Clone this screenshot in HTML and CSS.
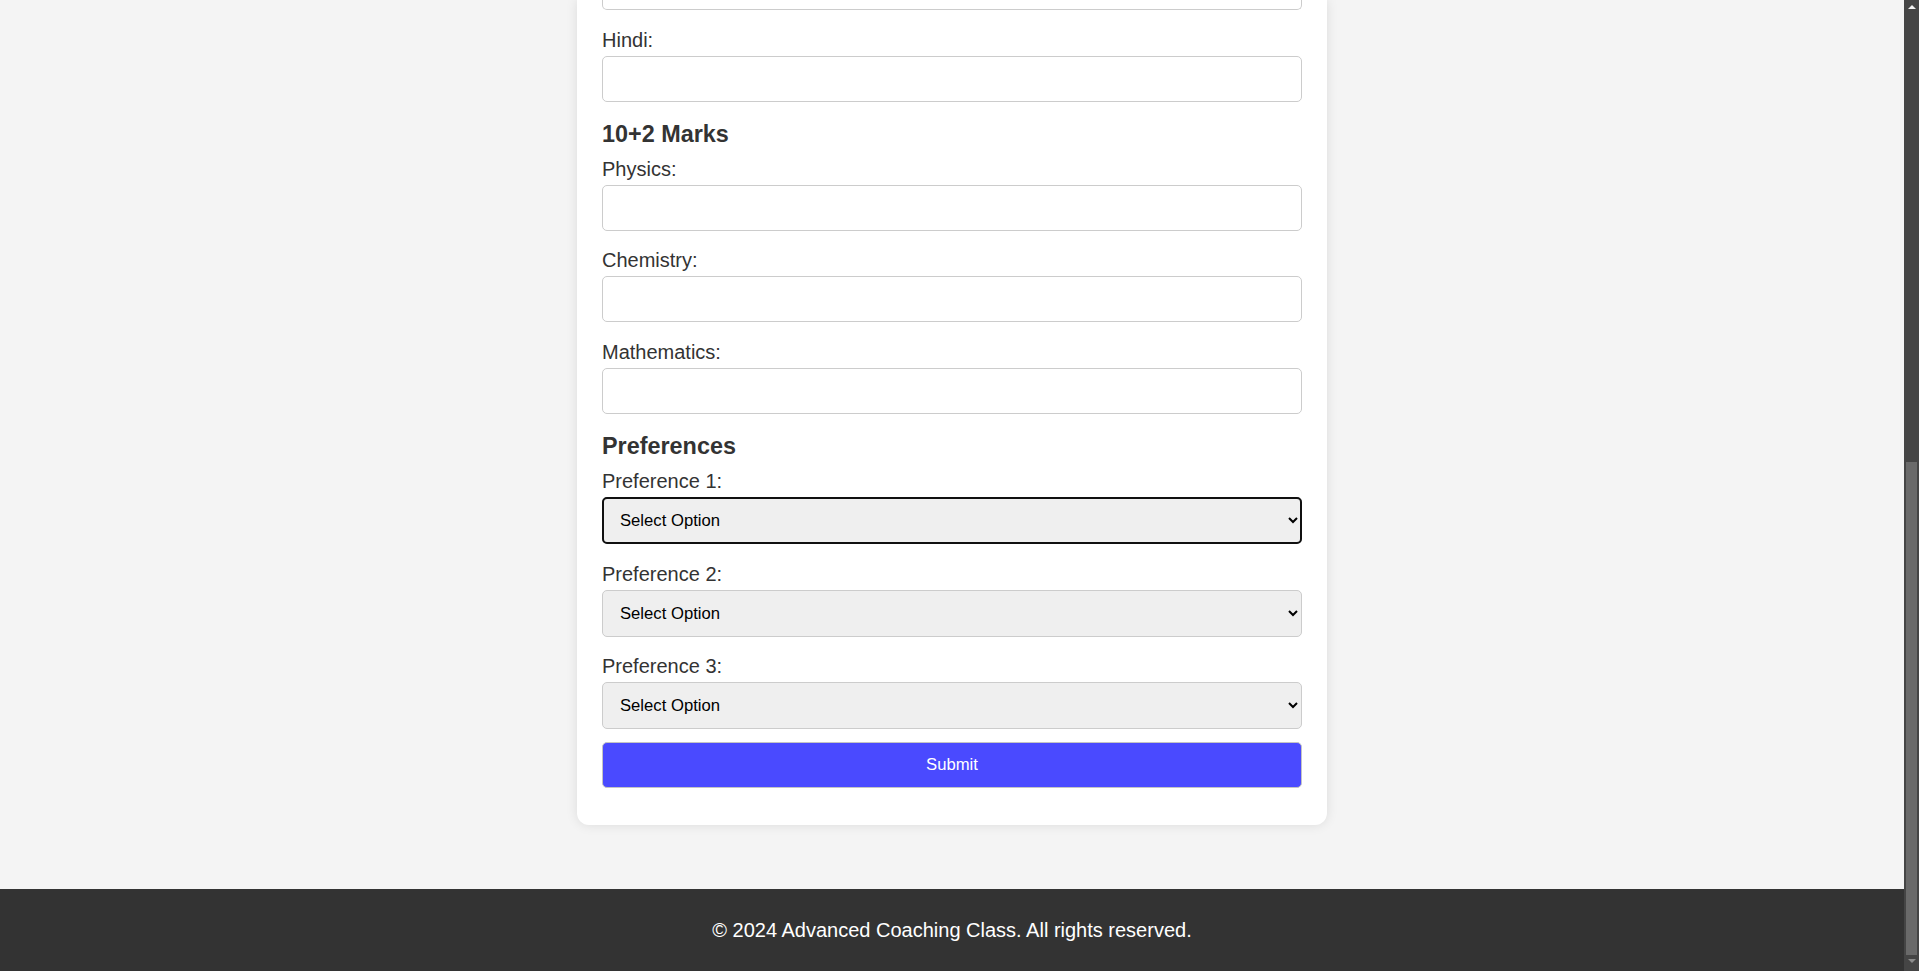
FILE: index.html
```html
<!DOCTYPE html>
<html lang="en">
<head>
<meta charset="utf-8">
<title>Advanced Coaching Class - Registration</title>
<link rel="stylesheet" href="styles.css">
</head>
<body>
<div class="window">
  <div class="page">
    <main class="page-main">
      <form class="card">
        <div class="field-tail" aria-hidden="true"></div>
        <div class="field"><label class="field-label" for="h10">Hindi:</label><input class="field-input" id="h10" type="number"></div>

        <h3 class="section-title">10+2 Marks</h3>
        <div class="field"><label class="field-label" for="p12">Physics:</label><input class="field-input" id="p12" type="number"></div>
        <div class="field"><label class="field-label" for="c12">Chemistry:</label><input class="field-input" id="c12" type="number"></div>
        <div class="field"><label class="field-label" for="m12">Mathematics:</label><input class="field-input" id="m12" type="number"></div>

        <h3 class="section-title">Preferences</h3>
        <div class="field"><label class="field-label" for="pref1">Preference 1:</label>
          <select class="field-select is-focused" id="pref1"><option>Select Option</option><option>JEE Main</option><option>JEE Advanced</option><option>NEET</option></select></div>
        <div class="field"><label class="field-label" for="pref2">Preference 2:</label>
          <select class="field-select" id="pref2"><option>Select Option</option><option>JEE Main</option><option>JEE Advanced</option><option>NEET</option></select></div>
        <div class="field field-last"><label class="field-label" for="pref3">Preference 3:</label>
          <select class="field-select" id="pref3"><option>Select Option</option><option>JEE Main</option><option>JEE Advanced</option><option>NEET</option></select></div>

        <button class="submit-btn" type="button">Submit</button>
      </form>
    </main>
    <footer class="site-footer">
      <p class="footer-text">© 2024 Advanced Coaching Class. All rights reserved.</p>
    </footer>
  </div>
  <div class="scrollbar" aria-hidden="true">
    <div class="scroll-btn scroll-btn-up"><span class="arrow-up"></span></div>
    <div class="scroll-track"><div class="scroll-thumb"></div></div>
    <div class="scroll-btn scroll-btn-down"><span class="arrow-down"></span></div>
  </div>
</div>
</body>
</html>
```

FILE: styles.css
```css
* { box-sizing: border-box; }

html, body {
  margin: 0;
  padding: 0;
  height: 100%;
  overflow: hidden;
}

body {
  background: #f4f4f4;
  font-family: "Liberation Sans", Arial, sans-serif;
  color: #333;
}

.window {
  display: flex;
  height: 100vh;
}

.page {
  flex: 1;
  display: flex;
  flex-direction: column;
  min-width: 0;
}

.page-main {
  flex: 1;
}

/* scrollbar column */
.scrollbar {
  width: 15px;
  flex: none;
  display: flex;
  flex-direction: column;
  background: #454545;
}
.scroll-btn {
  display: flex;
  justify-content: center;
  flex: none;
}
.scroll-btn-up {
  height: 17px;
  padding-top: 5px;
}
.scroll-btn-down {
  height: 16px;
  padding-top: 4px;
}
.arrow-up {
  width: 0;
  height: 0;
  border-left: 4px solid transparent;
  border-right: 4px solid transparent;
  border-bottom: 4px solid #f0f0f0;
}
.arrow-down {
  width: 0;
  height: 0;
  border-left: 4px solid transparent;
  border-right: 4px solid transparent;
  border-top: 4px solid #8c8c8c;
}
.scroll-track {
  flex: 1;
  display: flex;
  flex-direction: column;
  justify-content: flex-end;
  padding: 0 2px;
}
.scroll-thumb {
  height: 493px;
  background: #6a6a6a;
}

/* card */
.card {
  width: 750px;
  margin: 0 auto;
  background: #fff;
  border-radius: 0 0 12px 12px;
  padding: 0 25px 37px;
  box-shadow: 0 0 12px rgba(0, 0, 0, 0.1);
}

.field-tail {
  height: 10px;
  border: 1px solid #ccc;
  border-top: none;
  border-radius: 0 0 5px 5px;
  margin-bottom: 18.75px;
}

.section-title {
  margin: 0 0 10px;
  font-size: 23.4px;
  line-height: 27px;
  font-weight: bold;
  color: #333;
}

.field {
  margin-bottom: 18.75px;
}
.field-last {
  margin-bottom: 13px;
}

.field-label {
  display: block;
  font-size: 20px;
  line-height: 23px;
  margin-bottom: 4px;
  color: #333;
}

.field-input,
.field-select {
  display: block;
  width: 100%;
  border: 1px solid #ccc;
  border-radius: 5px;
  font-family: "Liberation Sans", Arial, sans-serif;
}

.field-input {
  height: 46px;
  padding: 10px;
  font-size: 20px;
  background: #fff;
}

.field-select {
  height: 47px;
  padding: 0 10px 0 13px;
  font-size: 16.67px;
  color: #000;
  background-color: #efefef;
}

.is-focused {
  outline: 2px solid #101010;
  outline-offset: -2px;
}

.submit-btn {
  display: block;
  width: 100%;
  height: 46px;
  background: #4a4aff;
  color: #fff;
  border: 1px solid #c4c4c4;
  border-radius: 5px;
  font-family: "Liberation Sans", Arial, sans-serif;
  font-size: 16.67px;
  cursor: pointer;
}

.site-footer {
  flex: none;
  background: #333;
  color: #fff;
  text-align: center;
  padding: 30px 0 29px;
}
.footer-text {
  margin: 0;
  font-size: 20px;
  line-height: 23px;
}
```
